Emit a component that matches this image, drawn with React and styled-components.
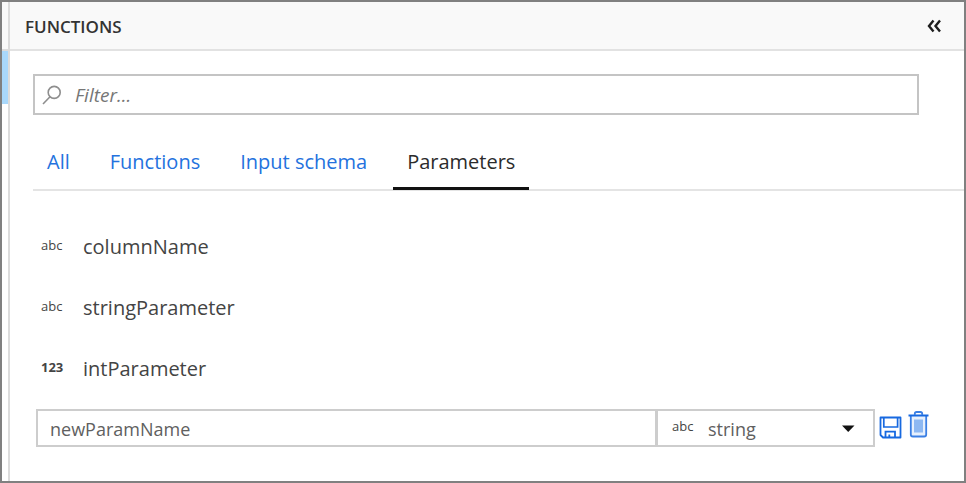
import React, { useState } from "react";
import styled, { createGlobalStyle } from "styled-components";

const GlobalStyle = createGlobalStyle`
  *, *::before, *::after { box-sizing: border-box; }
  body {
    margin: 0;
    background: #fff;
    color: #444;
    font-family: "Open Sans", "Noto Sans", sans-serif;
  }
  button, input, select { font: inherit; color: inherit; margin: 0; }
`;

const Frame = styled.div`
  display: flex;
  min-height: 100vh;
  border: 2px solid #808080;
`;

const Rail = styled.div`
  flex: none;
  width: 8px;
  padding-top: 47px;
  border-right: 2px solid #dcdcdc;
  background: linear-gradient(#f9f9f9 47px, #fff 47px);
`;

const RailMarker = styled.div`
  height: 55px;
  background: #a9d8fb;
  border-top: 2px solid #dcdcdc;
`;

const Panel = styled.main`
  flex: 1;
  min-width: 0;
`;

const Header = styled.header`
  display: flex;
  align-items: center;
  justify-content: space-between;
  height: 49px;
  padding: 0 21px 0 15px;
  background: #f9f9f9;
  border-bottom: 2px solid #e2e2e2;
`;

const Title = styled.h1`
  margin: 0;
  padding-top: 2px;
  font-size: 17px;
  line-height: 24px;
  font-weight: 600;
  color: #333;
`;

const IconButton = styled.button`
  display: flex;
  padding: 0;
  border: 0;
  background: none;
  cursor: pointer;
`;

const Body = styled.div`
  padding: 23px 0 0 23px;
`;

const FilterBox = styled.label`
  display: flex;
  align-items: center;
  gap: 13px;
  height: 41px;
  margin-right: 45px;
  padding: 0 7px;
  border: 2px solid #c4c4c4;
`;

const FilterInput = styled.input`
  flex: 1;
  min-width: 0;
  padding: 0;
  border: 0;
  outline: 0;
  background: none;
  font-size: 19px;
  line-height: 28px;
  &::placeholder { color: #767676; font-style: italic; opacity: 1; }
`;

const Tabs = styled.div`
  display: flex;
  gap: 12px;
  height: 76px;
  padding-top: 20px;
  border-bottom: 2px solid #e4e4e4;
`;

const Tab = styled.button`
  height: 55px;
  padding: 2px 14px 0;
  border: 0;
  border-bottom: 3px solid ${(p) => (p.$active ? "#111" : "transparent")};
  background: none;
  font-size: 20px;
  line-height: 28px;
  color: ${(p) => (p.$active ? "#2b2b2b" : "#2472de")};
  white-space: nowrap;
  cursor: pointer;
`;

const ParameterList = styled.ul`
  margin: 0;
  padding: 25px 0 0 8px;
  list-style: none;
`;

const ParameterRow = styled.li`
  display: flex;
  align-items: center;
  height: 61px;
  font-size: 20px;
  line-height: 28px;
`;

const TypeTag = styled.span`
  flex: none;
  width: ${(p) => p.$width}px;
  padding-bottom: 4px;
  font-size: 13px;
  line-height: 16px;
  font-weight: ${(p) => (p.$numeric ? 700 : 500)};
`;

const EditRow = styled.form`
  display: flex;
  align-items: flex-start;
  margin: 10px 35px 0 3px;
`;

const NameInput = styled.input`
  flex: 1;
  min-width: 0;
  height: 38px;
  padding: 2px 12px 0;
  border: 2px solid #cdcdcd;
  border-radius: 0;
  outline: 0;
  font-size: 18px;
  color: #606060;
`;

const TypePicker = styled.label`
  display: flex;
  align-items: center;
  width: 219px;
  height: 38px;
  margin-left: -1px;
  padding: 0 18px 0 14px;
  border: 2px solid #cdcdcd;
`;

const TypeSelect = styled.select`
  flex: 1;
  min-width: 0;
  padding: 2px 0 0;
  border: 0;
  outline: 0;
  background: none;
  appearance: none;
  font-size: 18px;
  line-height: 28px;
  color: #606060;
`;

const Actions = styled.div`
  display: flex;
  align-items: flex-start;
  gap: 6px;
  padding: 2px 0 0 4px;
`;

const SaveButton = styled(IconButton)`
  padding-top: 5px;
`;

const CollapseIcon = () => (
  <svg width="18" height="16" viewBox="0 0 18 16" fill="none" stroke="#1e1e1e" strokeWidth="2.4">
    <path d="M8.500 2.500 4 8l4.500 5.500M15 2.500l-4.500 5.500 4.500 5.500" />
  </svg>
);

const SearchIcon = () => (
  <svg width="20" height="20" viewBox="0 0 20 20" fill="none" stroke="#8e8e8e" strokeWidth="1.6">
    <circle cx="12.2" cy="7.4" r="6" />
    <path d="M8 11.8 1 19" />
  </svg>
);

const CaretIcon = () => (
  <svg width="14" height="8" viewBox="0 0 14 8" fill="#111">
    <path d="M1 1.500h12.500L7.200 8z" />
  </svg>
);

const SaveIcon = () => (
  <svg width="23" height="23" viewBox="0 0 23 23" fill="none" stroke="#1769e0" strokeWidth="1.8">
    <path d="M1.500 1.500h20v20H4l-2.500-2.500z" strokeLinejoin="round" />
    <path d="M4.800 1.500v9.500h13.800V1.500" strokeWidth="1.700" />
    <path d="M6.500 21.500v-5.800h9.500v5.800M10.300 18.500v3" strokeWidth="1.800" />
  </svg>
);

const TrashIcon = () => (
  <svg width="21" height="27" viewBox="0 0 21 27" fill="none" stroke="#3a7fe4">
    <path d="M2.800 5v18.500q0 2 2 2h11.400q2 0 2-2V5" fill="#e6f0fd" strokeWidth="1.800" />
    <path d="M6 8.500h9v13H6z" fill="#8db8f2" stroke="none" />
    <path d="M.5 4.500h20" stroke="#1769e0" strokeWidth="2" />
    <path d="M6.800 4V2.800Q6.800 1 8.600 1h3.800q1.800 0 1.800 1.800V4" strokeWidth="1.800" />
  </svg>
);

const TABS = ["All", "Functions", "Input schema", "Parameters"];
const PARAMETERS = [
  { name: "columnName", tag: "abc" },
  { name: "stringParameter", tag: "abc" },
  { name: "intParameter", tag: "123", numeric: true },
];

export default function App() {
  const [active, setActive] = useState("Parameters");
  return (
    <>
      <GlobalStyle />
      <Frame>
        <Rail>
          <RailMarker />
        </Rail>
        <Panel>
          <Header>
            <Title>FUNCTIONS</Title>
            <IconButton type="button" aria-label="Collapse panel">
              <CollapseIcon />
            </IconButton>
          </Header>
          <Body>
            <FilterBox>
              <SearchIcon />
              <FilterInput type="text" placeholder="Filter..." aria-label="Filter" />
            </FilterBox>
            <Tabs role="tablist">
              {TABS.map((name) => (
                <Tab
                  key={name}
                  type="button"
                  role="tab"
                  aria-selected={name === active}
                  $active={name === active}
                  onClick={() => setActive(name)}
                >
                  {name}
                </Tab>
              ))}
            </Tabs>
            <ParameterList>
              {PARAMETERS.map((p) => (
                <ParameterRow key={p.name}>
                  <TypeTag $width={42} $numeric={p.numeric}>{p.tag}</TypeTag>
                  {p.name}
                </ParameterRow>
              ))}
            </ParameterList>
            <EditRow onSubmit={(e) => e.preventDefault()}>
              <NameInput type="text" defaultValue="newParamName" aria-label="Parameter name" />
              <TypePicker>
                <TypeTag $width={36}>abc</TypeTag>
                <TypeSelect defaultValue="string" aria-label="Parameter type">
                  <option>string</option>
                </TypeSelect>
                <CaretIcon />
              </TypePicker>
              <Actions>
                <SaveButton type="submit" aria-label="Save parameter">
                  <SaveIcon />
                </SaveButton>
                <IconButton type="button" aria-label="Delete parameter">
                  <TrashIcon />
                </IconButton>
              </Actions>
            </EditRow>
          </Body>
        </Panel>
      </Frame>
    </>
  );
}
